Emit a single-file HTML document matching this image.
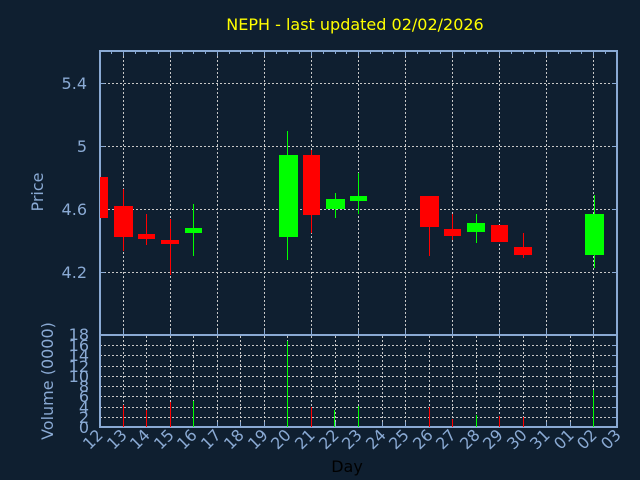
<!DOCTYPE html>
<html><head><style>html,body{margin:0;padding:0;background:#0f1f30;}svg{display:block}</style></head><body>
<svg width="640" height="480" xmlns="http://www.w3.org/2000/svg" font-family="DejaVu Sans, Liberation Sans, sans-serif">
<rect width="640" height="480" fill="#0f1f30"/>
<text x="355" y="30" fill="#ffff00" font-size="16" text-anchor="middle">NEPH - last updated 02/02/2026</text>
<g stroke="#c8c8c8" stroke-width="1" stroke-dasharray="2,2">
<path d="M100 83.5H617M100 146.5H617M100 209.5H617M100 272.5H617"/>
<path d="M123.5 52V334M170.5 52V334M217.5 52V334M264.5 52V334M311.5 52V334M358.5 52V334M405.5 52V334M452.5 52V334M499.5 52V334M546.5 52V334M593.5 52V334"/>
<path d="M100 345.5H617M100 355.5H617M100 366.5H617M100 376.5H617M100 386.5H617M100 396.5H617M100 407.5H617M100 417.5H617"/>
<path d="M123.5 336V427M146.5 336V427M170.5 336V427M193.5 336V427M217.5 336V427M240.5 336V427M264.5 336V427M287.5 336V427M311.5 336V427M335.5 336V427M358.5 336V427M382.5 336V427M405.5 336V427M429.5 336V427M452.5 336V427M476.5 336V427M499.5 336V427M523.5 336V427M546.5 336V427M570.5 336V427M593.5 336V427"/>
</g>
<g stroke="#8aaad4" stroke-width="2" fill="none">
<path d="M100 51H617V427H100Z"/>
<path d="M100 335H617"/>
</g>
<g stroke="#8aaad4" stroke-width="1">
<path d="M123.5 51v5M170.5 51v5M217.5 51v5M264.5 51v5M311.5 51v5M358.5 51v5M405.5 51v5M452.5 51v5M499.5 51v5M546.5 51v5M593.5 51v5M111.5 51v3M135.5 51v3M146.5 51v3M158.5 51v3M182.5 51v3M193.5 51v3M205.5 51v3M229.5 51v3M240.5 51v3M252.5 51v3M276.5 51v3M287.5 51v3M299.5 51v3M323.5 51v3M335.5 51v3M346.5 51v3M370.5 51v3M382.5 51v3M393.5 51v3M417.5 51v3M429.5 51v3M440.5 51v3M464.5 51v3M476.5 51v3M487.5 51v3M511.5 51v3M523.5 51v3M534.5 51v3M558.5 51v3M570.5 51v3M581.5 51v3M605.5 51v3"/>
<path d="M123.5 335v-5M170.5 335v-5M217.5 335v-5M264.5 335v-5M311.5 335v-5M358.5 335v-5M405.5 335v-5M452.5 335v-5M499.5 335v-5M546.5 335v-5M593.5 335v-5"/>
<path d="M123.5 427v-5M146.5 427v-5M170.5 427v-5M193.5 427v-5M217.5 427v-5M240.5 427v-5M264.5 427v-5M287.5 427v-5M311.5 427v-5M335.5 427v-5M358.5 427v-5M382.5 427v-5M405.5 427v-5M429.5 427v-5M452.5 427v-5M476.5 427v-5M499.5 427v-5M523.5 427v-5M546.5 427v-5M570.5 427v-5M593.5 427v-5"/>
<path d="M100 83.5h5M100 146.5h5M100 209.5h5M100 272.5h5M617 83.5h-5M617 146.5h-5M617 209.5h-5M617 272.5h-5"/>
<path d="M617 345.5h-5M617 355.5h-5M617 366.5h-5M617 376.5h-5M617 386.5h-5M617 396.5h-5M617 407.5h-5M617 417.5h-5"/>
</g>
<g stroke-width="1">
<path stroke="#ff0000" d="M123.5 189V251M146.5 214V245M170.5 219V275M311.5 150V233M429.5 196V256M452.5 214V240M499.5 225V242M523.5 233V258"/>
<path stroke="#00ff00" d="M193.5 204V256M287.5 131V260M335.5 193V218M358.5 173V214M476.5 214V243M594.5 195V268"/>
</g>
<g fill="#ff0000">
<rect x="100" y="177" width="8" height="41"/>
<rect x="114" y="206" width="19" height="31"/>
<rect x="138" y="234" width="17" height="5"/>
<rect x="161" y="240" width="18" height="4"/>
<rect x="303" y="155" width="17" height="60"/>
<rect x="420" y="196" width="19" height="31"/>
<rect x="444" y="229" width="17" height="7"/>
<rect x="491" y="225" width="17" height="17"/>
<rect x="514" y="247" width="18" height="8"/>
</g>
<g fill="#00ff00">
<rect x="185" y="228" width="17" height="5"/>
<rect x="279" y="155" width="19" height="82"/>
<rect x="326" y="199" width="19" height="10"/>
<rect x="350" y="196" width="17" height="5"/>
<rect x="467" y="223" width="18" height="9"/>
<rect x="585" y="214" width="19" height="41"/>
</g>
<g stroke-width="1">
<path stroke="#ff0000" d="M123.5 405V427M146.5 410V427M170.5 402V427M311.5 407V427M429.5 407V427M452.5 419V427M499.5 416V427M523.5 417V427"/>
<path stroke="#00ff00" d="M193.5 401V427M287.5 341V427M334.5 410V427M358.5 406V427M476.5 415V427M593.5 390V427"/>
</g>
<g fill="#8aaad4" font-size="16">
<text x="87" y="89" text-anchor="end">5.4</text>
<text x="87" y="152" text-anchor="end">5</text>
<text x="87" y="215" text-anchor="end">4.6</text>
<text x="87" y="278" text-anchor="end">4.2</text>
<text x="43" y="192" text-anchor="middle" transform="rotate(-90 43 192)">Price</text>
<text x="53" y="381" text-anchor="middle" transform="rotate(-90 53 381)">Volume (0000)</text>
</g>
<text x="347" y="472" text-anchor="middle" font-size="16" fill="#000">Day</text>
<g fill="#8aaad4" font-size="16" text-anchor="end">
<text x="89" y="340">18</text><text x="89" y="351">16</text><text x="89" y="361">14</text><text x="89" y="372">12</text><text x="89" y="382">10</text><text x="89" y="392">8</text><text x="89" y="402">6</text><text x="89" y="413">4</text><text x="89" y="423">2</text><text x="89" y="433">0</text>
</g>
<g fill="#8aaad4" font-size="16" text-anchor="end">
<text transform="translate(104 436) rotate(-45)">12</text>
<text transform="translate(128 436) rotate(-45)">13</text>
<text transform="translate(151 436) rotate(-45)">14</text>
<text transform="translate(175 436) rotate(-45)">15</text>
<text transform="translate(198 436) rotate(-45)">16</text>
<text transform="translate(222 436) rotate(-45)">17</text>
<text transform="translate(245 436) rotate(-45)">18</text>
<text transform="translate(269 436) rotate(-45)">19</text>
<text transform="translate(292 436) rotate(-45)">20</text>
<text transform="translate(316 436) rotate(-45)">21</text>
<text transform="translate(340 436) rotate(-45)">22</text>
<text transform="translate(363 436) rotate(-45)">23</text>
<text transform="translate(387 436) rotate(-45)">24</text>
<text transform="translate(410 436) rotate(-45)">25</text>
<text transform="translate(434 436) rotate(-45)">26</text>
<text transform="translate(457 436) rotate(-45)">27</text>
<text transform="translate(481 436) rotate(-45)">28</text>
<text transform="translate(504 436) rotate(-45)">29</text>
<text transform="translate(528 436) rotate(-45)">30</text>
<text transform="translate(551 436) rotate(-45)">31</text>
<text transform="translate(575 436) rotate(-45)">01</text>
<text transform="translate(598 436) rotate(-45)">02</text>
<text transform="translate(622 436) rotate(-45)">03</text>
</g>
</svg>
</body></html>
